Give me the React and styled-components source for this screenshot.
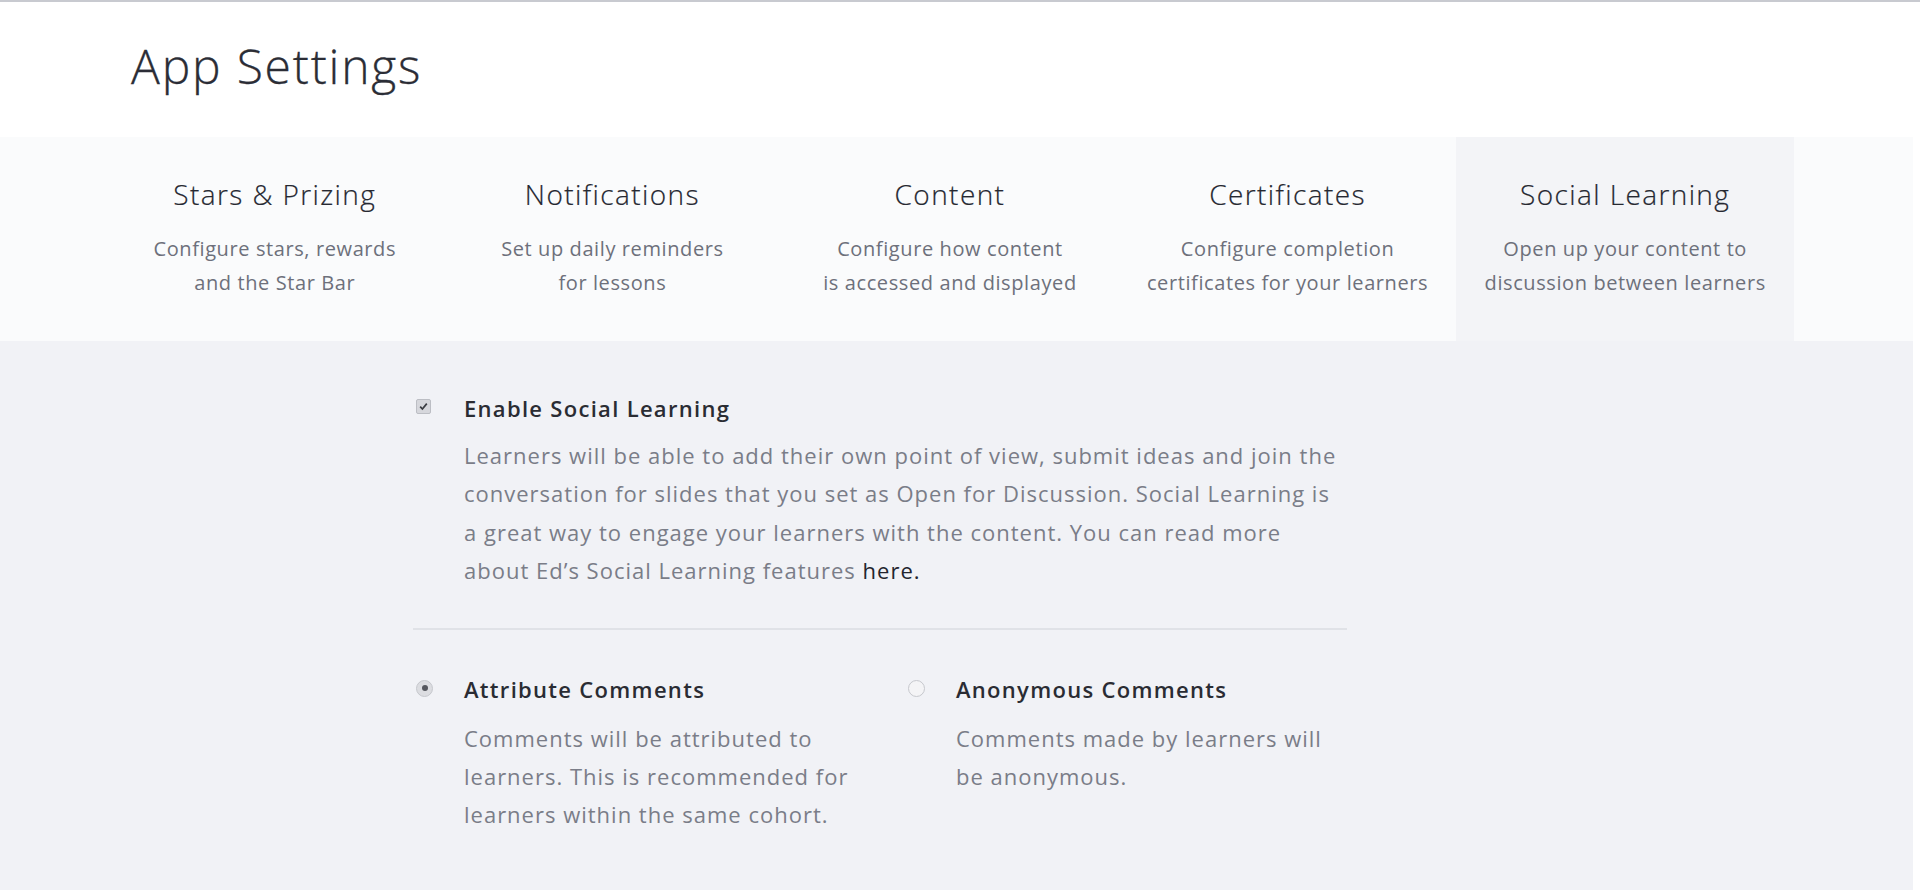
import React from 'react'
import styled, { createGlobalStyle } from 'styled-components'

const GlobalStyle = createGlobalStyle`
  html, body {
    margin: 0;
    padding: 0;
    background: #ffffff;
  }
  body {
    font-family: 'Open Sans', 'Lato', sans-serif;
  }
`

const Page = styled.div`
  min-height: 890px;
  display: flex;
  flex-direction: column;
  border-top: 2px solid #c8cad0;
  box-sizing: border-box;
  padding-right: 7px;
`

const Header = styled.header`
  height: 135px;
  display: flex;
  align-items: center;
  padding-left: 131px;
  padding-bottom: 8px;
  box-sizing: border-box;
`

const Title = styled.h1`
  margin: 0;
  font-weight: 300;
  font-size: 48px;
  color: #2b2d36;
  letter-spacing: 1.8px;
  -webkit-text-stroke: 0.3px #2b2d36;
`

const TabStrip = styled.nav`
  height: 204px;
  display: flex;
  background: #fafbfc;
  padding-left: 106px;
`

const Tab = styled.div`
  width: 337.6px;
  text-align: center;
  padding-top: 39px;
  box-sizing: border-box;
  background: ${p => (p.$active ? '#f3f4f7' : 'transparent')};
`

const TabTitle = styled.div`
  font-weight: 300;
  font-size: 28px;
  color: #262831;
  line-height: 36px;
  letter-spacing: 1.4px;
  -webkit-text-stroke: 0.2px #262831;
`

const TabDesc = styled.div`
  margin-top: 20px;
  font-size: 20px;
  line-height: 34px;
  color: #6d707b;
  letter-spacing: 0.6px;
`

const Content = styled.main`
  flex: 1;
  background: #f1f2f6;
  padding: 53px 0 40px 413px;
`

const Column = styled.div`
  width: 934px;
`

const Option = styled.div`
  display: flex;
  align-items: flex-start;
  width: ${p => p.$width || 'auto'};
  flex: ${p => (p.$width ? 'none' : '1')};
`

const Control = styled.div`
  width: 51px;
  flex-shrink: 0;
  padding-top: 5px;
  padding-left: 3px;
  box-sizing: border-box;
`

const Check = styled.span`
  display: block;
  width: 15px;
  height: 15px;
  border-radius: 2px;
  background: #d6d7dc;
  border: 1px solid #bcbec4;
  box-sizing: border-box;
  position: relative;

  svg {
    position: absolute;
    left: 0;
    top: 0;
  }
`

const Radio = styled.span`
  display: block;
  width: 17px;
  height: 17px;
  border-radius: 50%;
  background: ${p => (p.$checked ? '#dcdde1' : '#f4f4f6')};
  border: 1px solid #c6c8cd;
  box-sizing: border-box;
  position: relative;

  &::after {
    content: '';
    display: ${p => (p.$checked ? 'block' : 'none')};
    position: absolute;
    left: 4.5px;
    top: 4.5px;
    width: 6px;
    height: 6px;
    border-radius: 50%;
    background: #55575e;
  }
`

const Body = styled.div`
  flex: 1;
`

const Label = styled.div`
  font-size: 22px;
  font-weight: 600;
  color: #2a2c33;
  line-height: 28px;
  letter-spacing: 1.3px;
`

const Text = styled.p`
  margin: ${p => (p.$gap || 14)}px 0 0;
  font-size: 22px;
  line-height: 38.4px;
  color: #7a7d88;
  letter-spacing: 1px;
  white-space: nowrap;

  a {
    color: #23252e;
    text-decoration: none;
  }
`

const Divider = styled.hr`
  border: none;
  border-top: 2px solid #e0e2e7;
  margin: 38px 0 45px;
`

const Row = styled.div`
  display: flex;
`

const tabs = [
  ['Stars & Prizing', 'Configure stars, rewards', 'and the Star Bar'],
  ['Notifications', 'Set up daily reminders', 'for lessons'],
  ['Content', 'Configure how content', 'is accessed and displayed'],
  ['Certificates', 'Configure completion', 'certificates for your learners'],
  ['Social Learning', 'Open up your content to', 'discussion between learners'],
]

export default function App() {
  return (
    <>
      <GlobalStyle />
      <Page>
        <Header>
          <Title>App Settings</Title>
        </Header>
        <TabStrip>
          {tabs.map(([title, a, b], i) => (
            <Tab key={title} $active={i === 4}>
              <TabTitle>{title}</TabTitle>
              <TabDesc>
                {a}
                <br />
                {b}
              </TabDesc>
            </Tab>
          ))}
        </TabStrip>
        <Content>
          <Column>
            <Option>
              <Control>
                <Check>
                  <svg width="13" height="13" viewBox="0 0 13 13">
                    <path d="M3.2 6.6 L5.4 9 L9.8 3.6" fill="none" stroke="#3a3c42" strokeWidth="1.7" />
                  </svg>
                </Check>
              </Control>
              <Body>
                <Label>Enable Social Learning</Label>
                <Text>
                  Learners will be able to add their own point of view, submit ideas and join the
                  <br />
                  conversation for slides that you set as Open for Discussion. Social Learning is
                  <br />
                  a great way to engage your learners with the content. You can read more
                  <br />
                  about Ed’s Social Learning features <a href="#">here.</a>
                </Text>
              </Body>
            </Option>
            <Divider />
            <Row>
              <Option $width="492px">
                <Control>
                  <Radio $checked />
                </Control>
                <Body>
                  <Label>Attribute Comments</Label>
                  <Text $gap={16}>
                    Comments will be attributed to
                    <br />
                    learners. This is recommended for
                    <br />
                    learners within the same cohort.
                  </Text>
                </Body>
              </Option>
              <Option>
                <Control>
                  <Radio />
                </Control>
                <Body>
                  <Label>Anonymous Comments</Label>
                  <Text $gap={16}>
                    Comments made by learners will
                    <br />
                    be anonymous.
                  </Text>
                </Body>
              </Option>
            </Row>
          </Column>
        </Content>
      </Page>
    </>
  )
}
